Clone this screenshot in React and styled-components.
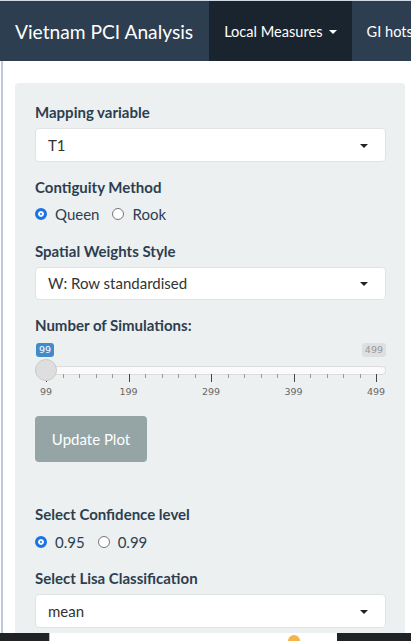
import React from 'react';
import styled, { createGlobalStyle } from 'styled-components';

const GlobalStyle = createGlobalStyle`
  body {
    margin: 0;
    background: #fff;
    font-family: Lato, 'Open Sans', sans-serif;
    color: #2c3e50;
  }
`;

const Navbar = styled.nav`
  display: flex;
  height: 60px;
  border-top: 1px solid #cfd9e3;
  background: #2c3e50;
  color: #fff;
  white-space: nowrap;
  overflow: hidden;
`;

const Brand = styled.div`
  display: flex;
  align-items: center;
  padding: 0 16px 0 15px;
  font-size: 19.2px;
`;

const NavItem = styled.div`
  display: flex;
  align-items: center;
  gap: 6px;
  padding: 0 15px;
  font-size: 14.6px;
  background: ${(p) => (p.active ? '#1a242f' : 'transparent')};
`;

const Caret = styled.span`
  width: 0;
  height: 0;
  margin-top: 2px;
  border-top: ${(p) => p.size || 4}px solid ${(p) => p.color || '#fff'};
  border-left: ${(p) => p.size || 4}px solid transparent;
  border-right: ${(p) => p.size || 4}px solid transparent;
`;

const Page = styled.main`
  margin-left: 1px;
  border-left: 2px solid #bccbdb;
  padding: 22px 6px 0 12px;
  min-height: 560px;
`;

const Well = styled.div`
  background: #ecf0f1;
  border-radius: 4px;
  padding: 19px 19px 10px 20px;
`;

const Group = styled.div`
  margin-bottom: 15px;
`;

const Label = styled.div`
  font-weight: 700;
  font-size: 15px;
  line-height: 21px;
  margin-bottom: 5px;
  color: #2c3e50;
`;

const Select = styled.div`
  display: flex;
  align-items: center;
  justify-content: space-between;
  height: 33.5px;
  box-sizing: border-box;
  padding: 0 17px 0 12px;
  background: #fff;
  border: 1px solid #e0e4e6;
  border-radius: 4px;
  font-size: 15px;
  color: #333;
`;

const Radios = styled.div`
  display: flex;
  align-items: center;
  height: 23px;
  font-size: 15px;
  color: #2c3e50;
`;

const RadioOpt = styled.label`
  display: flex;
  align-items: center;
  margin-right: 13px;
`;

const Dot = styled.span`
  width: 12px;
  height: 12px;
  box-sizing: border-box;
  border-radius: 50%;
  margin-right: 8px;
  background: #fff;
  border: ${(p) => (p.on ? '3px solid #1b73e8' : '1px solid #767676')};
  box-shadow: ${(p) => (p.on ? 'inset 0 0 0 2px #fff' : 'none')};
  ${(p) => p.on && 'background: #1b73e8;'}
`;

const Slider = styled.div`
  position: relative;
  height: 60px;
  margin-top: 1px;
`;

const Tag = styled.span`
  position: absolute;
  top: 2px;
  ${(p) => (p.right ? 'right: 0;' : 'left: 1px;')}
  height: 14px;
  padding: 0 3px;
  border-radius: 3px;
  font-family: 'DejaVu Sans', sans-serif;
  font-size: 9.5px;
  line-height: 14px;
  background: ${(p) => (p.right ? '#dde0e2' : '#428bca')};
  color: ${(p) => (p.right ? '#999' : '#fff')};
`;

const Track = styled.div`
  position: absolute;
  top: 25px;
  left: 0;
  right: 0;
  height: 7px;
  border: 1px solid #dcdcdc;
  border-radius: 4px;
  background: #fafafa;
`;

const Handle = styled.div`
  position: absolute;
  top: 18px;
  left: 0;
  width: 22px;
  height: 22px;
  box-sizing: border-box;
  border-radius: 50%;
  background: #dedede;
  border: 1px solid #c9c9c9;
`;

const Tick = styled.span`
  position: absolute;
  top: 33px;
  width: 1px;
  height: ${(p) => (p.major ? 8 : 4)}px;
  background: ${(p) => (p.major ? '#444' : '#999')};
`;

const TickText = styled.span`
  position: absolute;
  top: 45px;
  transform: translateX(-50%);
  font-family: 'DejaVu Sans', sans-serif;
  font-size: 9.5px;
  color: #666;
`;

const Button = styled.button`
  width: 112px;
  height: 46px;
  border: none;
  border-radius: 4px;
  background: #95a5a6;
  color: #fff;
  font-family: Lato, sans-serif;
  font-size: 15px;
  margin-bottom: 42px;
`;

const Footer = styled.div`
  position: fixed;
  left: 0;
  right: 0;
  bottom: 0;
  height: 8px;
  background: #1f2326;
  overflow: hidden;
`;

const FooterBox = styled.div`
  position: absolute;
  left: 49px;
  width: 287px;
  top: 0;
  height: 12px;
  background: #fff;
  border-left: 1px solid #bbb;
`;

const Pin = styled.div`
  position: absolute;
  left: 238px;
  top: 2px;
  width: 12px;
  height: 12px;
  border-radius: 50%;
  background: #f2b54b;
`;

const Radio = ({ options, value }) => (
  <Radios>
    {options.map((o) => (
      <RadioOpt key={o}>
        <Dot on={o === value} />
        {o}
      </RadioOpt>
    ))}
  </Radios>
);

const SimSlider = () => {
  const x0 = 11;
  const span = 330;
  const ticks = [];
  for (let i = 0; i <= 20; i++) {
    ticks.push({ x: x0 + (span * i) / 20, major: i % 5 === 0 });
  }
  const labels = [99, 199, 299, 399, 499];
  return (
    <Slider>
      <Tag>99</Tag>
      <Tag right>499</Tag>
      <Track />
      {ticks.map((t, i) => (
        <Tick key={i} major={t.major} style={{ left: t.x }} />
      ))}
      {labels.map((l, i) => (
        <TickText key={l} style={{ left: x0 + (span * i) / 4 }}>
          {l}
        </TickText>
      ))}
      <Handle />
    </Slider>
  );
};

const App = () => (
  <>
    <GlobalStyle />
    <Navbar>
      <Brand>Vietnam PCI Analysis</Brand>
      <NavItem active>
        Local Measures <Caret />
      </NavItem>
      <NavItem>GI hotspots</NavItem>
    </Navbar>
    <Page>
      <Well>
        <Group>
          <Label>Mapping variable</Label>
          <Select>
            T1 <Caret color="#222" size={4.5} />
          </Select>
        </Group>
        <Group>
          <Label>Contiguity Method</Label>
          <Radio options={['Queen', 'Rook']} value="Queen" />
        </Group>
        <Group>
          <Label>Spatial Weights Style</Label>
          <Select>
            W: Row standardised <Caret color="#222" size={4.5} />
          </Select>
        </Group>
        <Group>
          <Label>Number of Simulations:</Label>
          <SimSlider />
        </Group>
        <Button>Update Plot</Button>
        <Group>
          <Label>Select Confidence level</Label>
          <Radio options={['0.95', '0.99']} value="0.95" />
        </Group>
        <Group>
          <Label>Select Lisa Classification</Label>
          <Select>
            mean <Caret color="#222" size={4.5} />
          </Select>
        </Group>
      </Well>
    </Page>
    <Footer>
      <FooterBox>
        <Pin />
      </FooterBox>
    </Footer>
  </>
);

export default App;
